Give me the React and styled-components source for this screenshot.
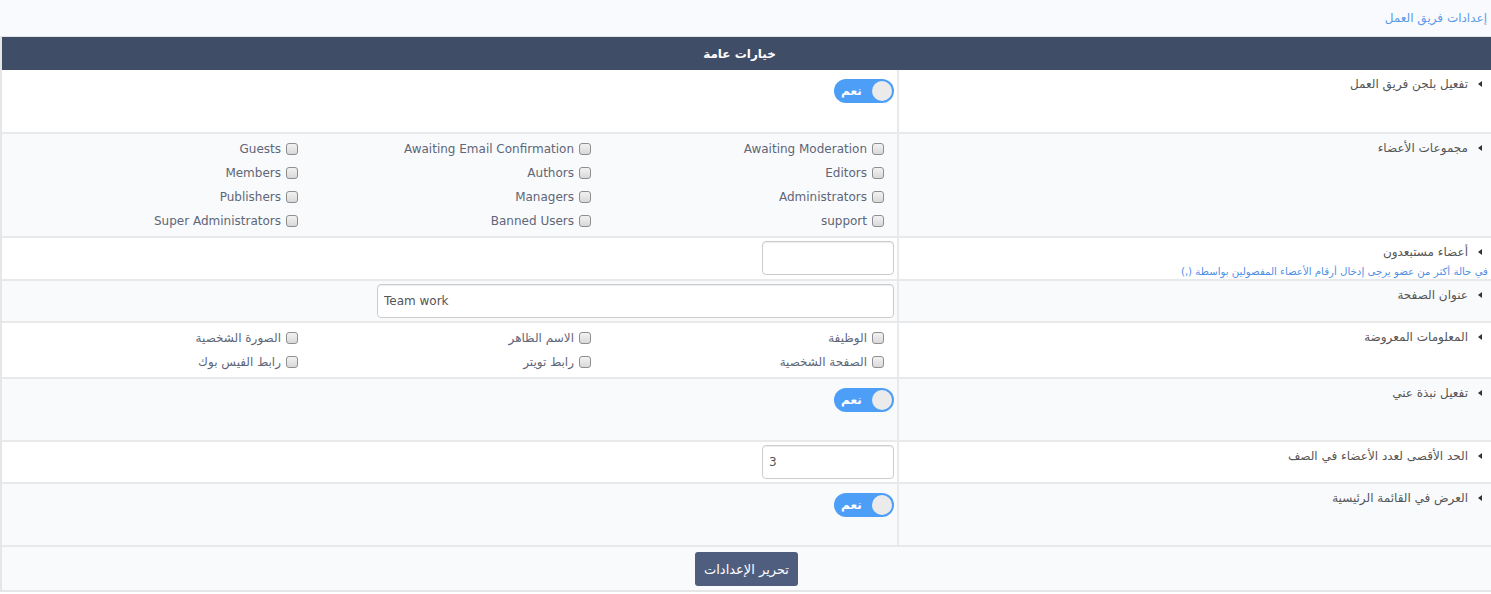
import React from "react";
import styled, { createGlobalStyle } from "styled-components";

const Global = createGlobalStyle`
  html, body { margin: 0; padding: 0; background: #ffffff; }
  body { font-family: "DejaVu Sans", Tahoma, sans-serif; font-size: 12px; color: #555; }
  * { box-sizing: border-box; }
`;

const Page = styled.div`
  direction: rtl;
  width: 1491px;
`;

const Breadcrumb = styled.div`
  height: 37px;
  background: #f9fafd;
  border-bottom: 1px solid #e3e4e7;
  padding: 11px 4px 0 0;
  font-size: 12px;
  line-height: 14px;
  color: #5b9be8;
`;

const Panel = styled.div`
  border-left: 2px solid #e6e6e6;
  border-bottom: 2px solid #e6e6e6;
`;

const PanelHeader = styled.div`
  height: 33px;
  background: #3f4d67;
  color: #fff;
  font-weight: bold;
  font-size: 12px;
  display: flex;
  align-items: center;
  justify-content: center;
  padding-right: 14px;
`;

const Row = styled.div`
  display: grid;
  grid-template-columns: 594px 1fr;
  background: ${(p) => (p.$alt ? "#f9fafc" : "#ffffff")};
  border-bottom: 2px solid #e8e9eb;
`;

const LabelCell = styled.div`
  border-left: 2px solid #e8e9eb;
  padding: 6px 9px 0 3px;
`;

const LabelLine = styled.div`
  display: flex;
  align-items: center;
  gap: 10px;
  height: 16px;
  font-size: 12px;
  color: #555;
`;

const Arrow = styled.span`
  width: 0;
  height: 0;
  border-top: 3.5px solid transparent;
  border-bottom: 3.5px solid transparent;
  border-right: 4px solid #333;
`;

const Helper = styled.div`
  margin-right: -6px;
  margin-top: 5px;
  font-size: 10.2px;
  line-height: 14px;
  color: #4f8fe6;
  white-space: nowrap;
`;

const ContentCell = styled.div`
  padding: 3px 3px 3px 4px;
`;

const ToggleField = styled.div`
  padding: 6px 0 ${(p) => p.$pb}px;
  display: flex;
`;

const Toggle = styled.div`
  width: 60px;
  height: 24px;
  border-radius: 12px;
  background: #4d9ef7;
  display: flex;
  align-items: center;
  justify-content: space-between;
  padding: 0 2px 0 6px;
  direction: ltr;
`;

const ToggleText = styled.span`
  color: #fff;
  font-weight: bold;
  font-size: 12px;
  padding-left: 1px;
`;

const Knob = styled.span`
  width: 20px;
  height: 20px;
  border-radius: 50%;
  background: #ebebeb;
`;

const CheckGrid = styled.div`
  display: grid;
  grid-template-columns: repeat(3, 293px);
  padding-right: 10px;
`;

const CheckItem = styled.label`
  display: flex;
  align-items: center;
  gap: 5px;
  height: 24px;
  font-size: 12px;
  color: #5e6678;
`;

const Box = styled.input`
  appearance: none;
  margin: 0;
  width: 12px;
  height: 12px;
  border: 1px solid #8e8f8f;
  border-radius: 3px;
  background: linear-gradient(#f2f2f2, #d9d9d9);
`;

const TextInput = styled.input`
  display: block;
  direction: ltr;
  width: ${(p) => p.$w}px;
  height: 34px;
  border: 1px solid #cccccc;
  border-radius: 4px;
  box-shadow: inset 0 1px 1px rgba(0, 0, 0, 0.075);
  padding: 0 6px;
  font-family: "DejaVu Sans", Tahoma, sans-serif;
  font-size: 12px;
  color: #555;
  background: #fff;
  outline: none;
`;

const Footer = styled.div`
  height: 43px;
  background: #f9fafc;
  display: flex;
  justify-content: center;
  padding-top: 5px;
`;

const Button = styled.button`
  width: 103px;
  height: 34px;
  border: none;
  border-radius: 3px;
  background: #4f5d7e;
  color: #fff;
  font-family: "DejaVu Sans", Tahoma, sans-serif;
  font-size: 13px;
`;

const Label = ({ children, helper }) => (
  <LabelCell>
    <LabelLine>
      <Arrow />
      <span>{children}</span>
    </LabelLine>
    {helper && <Helper>{helper}</Helper>}
  </LabelCell>
);

const Switch = ({ pb = 25 }) => (
  <ToggleField $pb={pb}>
    <Toggle>
      <ToggleText>نعم</ToggleText>
      <Knob />
    </Toggle>
  </ToggleField>
);

const Checks = ({ items }) => (
  <CheckGrid>
    {items.map((t) => (
      <CheckItem key={t}>
        <Box type="checkbox" />
        <span>{t}</span>
      </CheckItem>
    ))}
  </CheckGrid>
);

const groups = [
  "Awaiting Moderation",
  "Awaiting Email Confirmation",
  "Guests",
  "Editors",
  "Authors",
  "Members",
  "Administrators",
  "Managers",
  "Publishers",
  "support",
  "Banned Users",
  "Super Administrators",
];

const infos = [
  "الوظيفة",
  "الاسم الظاهر",
  "الصورة الشخصية",
  "الصفحة الشخصية",
  "رابط تويتر",
  "رابط الفيس بوك",
];

export default function App() {
  return (
    <>
      <Global />
      <Page>
        <Breadcrumb>إعدادات فريق العمل</Breadcrumb>
        <Panel>
          <PanelHeader>خيارات عامة</PanelHeader>
          <Row>
            <Label>تفعيل بلجن فريق العمل</Label>
            <ContentCell>
              <Switch pb={26} />
            </ContentCell>
          </Row>
          <Row $alt>
            <Label>مجموعات الأعضاء</Label>
            <ContentCell>
              <Checks items={groups} />
            </ContentCell>
          </Row>
          <Row>
            <Label helper="في حالة أكثر من عضو يرجى إدخال أرقام الأعضاء المفصولين بواسطة (,)">
              أعضاء مستبعدون
            </Label>
            <ContentCell>
              <TextInput $w={132} defaultValue="" />
            </ContentCell>
          </Row>
          <Row $alt>
            <Label>عنوان الصفحة</Label>
            <ContentCell>
              <TextInput $w={517} defaultValue="Team work" />
            </ContentCell>
          </Row>
          <Row>
            <Label>المعلومات المعروضة</Label>
            <ContentCell>
              <Checks items={infos} />
            </ContentCell>
          </Row>
          <Row $alt>
            <Label>تفعيل نبذة عني</Label>
            <ContentCell>
              <Switch />
            </ContentCell>
          </Row>
          <Row>
            <Label>الحد الأقصى لعدد الأعضاء في الصف</Label>
            <ContentCell>
              <TextInput $w={132} defaultValue="3" />
            </ContentCell>
          </Row>
          <Row $alt>
            <Label>العرض في القائمة الرئيسية</Label>
            <ContentCell>
              <Switch />
            </ContentCell>
          </Row>
          <Footer>
            <Button>تحرير الإعدادات</Button>
          </Footer>
        </Panel>
      </Page>
    </>
  );
}
